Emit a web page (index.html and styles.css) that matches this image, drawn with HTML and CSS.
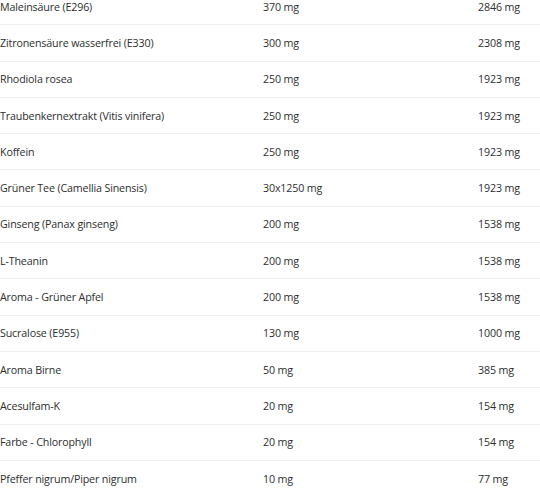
FILE: index.html
```html
<!DOCTYPE html>
<html>
<head>
<meta charset="utf-8">
<link rel="stylesheet" href="styles.css">
</head>
<body>
<table class="nut">
<tbody>
<tr><td>Maleinsäure (E296)</td><td>370 mg</td><td>2846 mg</td></tr>
<tr><td>Zitronensäure wasserfrei (E330)</td><td>300 mg</td><td>2308 mg</td></tr>
<tr><td>Rhodiola rosea</td><td>250 mg</td><td>1923 mg</td></tr>
<tr><td>Traubenkernextrakt (Vitis vinifera)</td><td>250 mg</td><td>1923 mg</td></tr>
<tr><td>Koffein</td><td>250 mg</td><td>1923 mg</td></tr>
<tr><td>Grüner Tee (Camellia Sinensis)</td><td>30x1250 mg</td><td>1923 mg</td></tr>
<tr><td>Ginseng (Panax ginseng)</td><td>200 mg</td><td>1538 mg</td></tr>
<tr><td>L-Theanin</td><td>200 mg</td><td>1538 mg</td></tr>
<tr><td>Aroma - Grüner Apfel</td><td>200 mg</td><td>1538 mg</td></tr>
<tr><td>Sucralose (E955)</td><td>130 mg</td><td>1000 mg</td></tr>
<tr><td>Aroma Birne</td><td>50 mg</td><td>385 mg</td></tr>
<tr><td>Acesulfam-K</td><td>20 mg</td><td>154 mg</td></tr>
<tr><td>Farbe - Chlorophyll</td><td>20 mg</td><td>154 mg</td></tr>
<tr><td>Pfeffer nigrum/Piper nigrum</td><td>10 mg</td><td>77 mg</td></tr>
</tbody>
</table>
</body>
</html>
```
FILE: styles.css
```css
html, body {
  margin: 0;
  padding: 0;
  background: #ffffff;
  overflow: hidden;
}
.nut {
  border-collapse: collapse;
  width: 540px;
  margin-top: -11px;
  table-layout: fixed;
  font-family: "Open Sans", "Noto Sans", sans-serif;
  font-size: 10.7px;
  letter-spacing: -0.15px;
  color: #2e2e2e;
}
.nut td {
  height: 35.3px;
  padding: 0;
  border-bottom: 1px solid #efefef;
  vertical-align: middle;
  white-space: nowrap;
}
.nut td:nth-child(1) { width: 263px; }
.nut td:nth-child(2) { width: 215px; }
.nut td:nth-child(3) { width: 62px; }
```
